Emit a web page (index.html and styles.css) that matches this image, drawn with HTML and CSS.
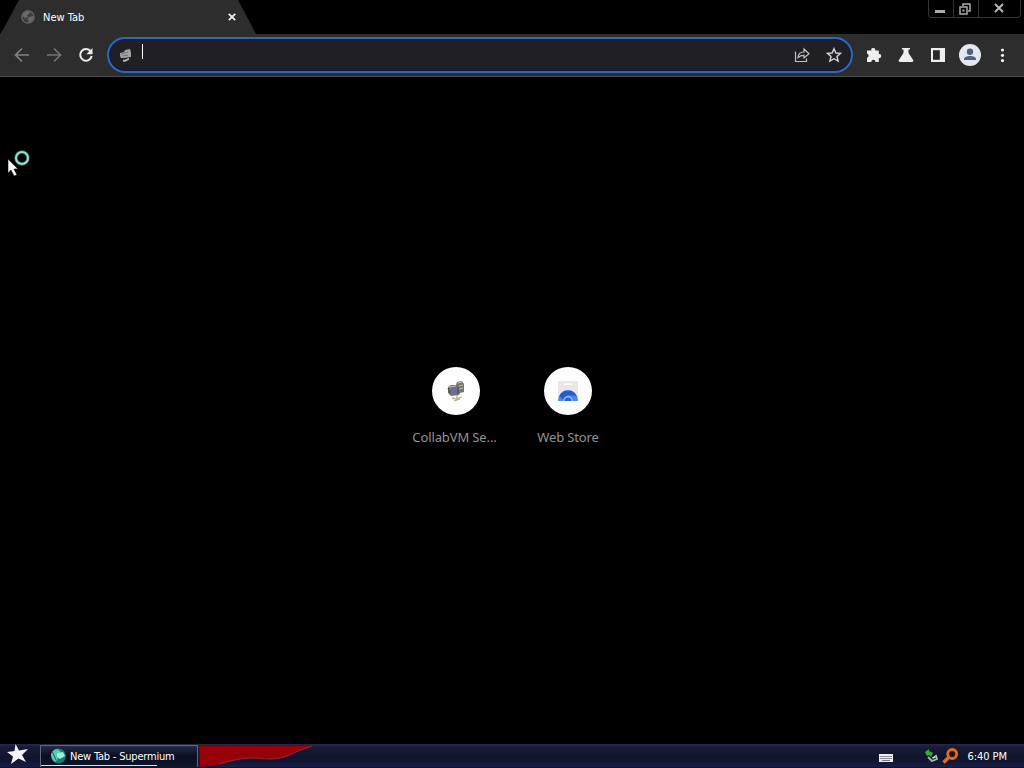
FILE: index.html
```html
<!DOCTYPE html>
<html lang="en">
<head>
<meta charset="utf-8">
<title>New Tab</title>
<link rel="stylesheet" href="styles.css">
</head>
<body>
<div class="screen">
  <header class="tabstrip">
    <div class="tab">
      <svg class="globe" width="14" height="14" viewBox="0 0 14 14"><circle cx="7" cy="7" r="6.200" fill="#3c3c3c" stroke="#666" stroke-width="1.300"/><path d="M2 3.500 6 1l3 1-1 2-2 1 1 2-3 1-3-2zM8 7l4-1 .5 2L10 12l-3 .5 1-2-2-1z" fill="#6a6a6a"/></svg>
      <span class="tab-title">New Tab</span>
      <svg class="tab-close" width="8" height="8" viewBox="0 0 8 8"><path d="M.8.8l6.400 6.400M7.200.8.8 7.200" stroke="#eee" stroke-width="1.800"/></svg>
    </div>
    <div class="window-controls">
      <span class="control minimize"><svg width="12" height="12" viewBox="0 0 12 12"><path d="M1 7.500h10" stroke="#aaa" stroke-width="3"/></svg></span>
      <span class="control restore"><svg width="12" height="12" viewBox="0 0 12 12" fill="none" stroke="#aaa" stroke-width="1.500"><path d="M4 3V1h7v7H9M1 4h7v7H1z"/><path d="M3.500 7.500h2" stroke-width="2"/></svg></span>
      <span class="control close"><svg width="10" height="10" viewBox="0 0 10 10"><path d="M1 1l8 8M9 1 1 9" stroke="#b8b8b8" stroke-width="2"/></svg></span>
    </div>
  </header>
  <nav class="toolbar">
    <div class="nav-buttons">
      <svg width="16" height="16" viewBox="0 0 16 16" fill="none" stroke="#818181" stroke-width="1.700"><path d="M15 8H2M8 1.500 1.500 8 8 14.500"/></svg>
      <svg width="16" height="16" viewBox="0 0 16 16" fill="none" stroke="#747474" stroke-width="1.700"><path d="M1 8h13M8 1.500 14.500 8 8 14.500"/></svg>
      <svg width="16" height="16" viewBox="0 0 16 16"><path d="M12.700 4.400A5.800 5.800 0 1 0 13.700 9" fill="none" stroke="#eee" stroke-width="2"/><path d="M14.500 1v6.200H8.300z" fill="#eee"/></svg>
    </div>
    <div class="omnibox">
      <svg class="site-icon" width="14" height="16" viewBox="0 0 14 16"><path d="M2 6l4-1 1-2 5-1 1 4v4l-7 1-3 0-1-2z" fill="#a5a3a3"/><path d="M3 7l7-2M4 9l6-1" stroke="#777"/><path d="M5 13.500l2 .3 4-2" stroke="#bbb" stroke-width="1.800" fill="none"/></svg>
      <span class="caret"></span>
      <svg class="share" width="16" height="16" viewBox="0 0 16 16" fill="none" stroke="#c0c0c0" stroke-width="1.200"><path d="M1.500 4.500v10h11v-3M4 10.500C4.200 7 6.500 5 10 5V2l5 4.700-5 4.300V8.300C7.500 8.200 5.700 9 4 10.500z"/></svg>
      <svg width="16" height="16" viewBox="0 0 16 16"><path d="M8 1.700 9.900 6l4.700.4-3.600 3.100 1.100 4.600L8 11.700l-4.100 2.400L5 9.500 1.400 6.400 6.100 6z" fill="none" stroke="#d5d5d5" stroke-width="1.400"/></svg>
    </div>
    <div class="actions">
      <svg width="16" height="16" viewBox="0 0 16 16"><path d="M1 3.500h4.300a2 2 0 1 1 3.900 0h3.600v3.600a2 2 0 1 1 0 3.900v3.900H9.500a2.100 2.100 0 0 0-4.200 0H1v-4.200a2.100 2.100 0 0 0 0-4.100z" fill="#eee"/></svg>
      <svg width="16" height="16" viewBox="0 0 16 16"><path d="M4 1h8v1.600h-1.500V6l4.700 7.100c.6 1-.1 1.900-1.100 1.900H1.900c-1 0-1.700-.9-1.100-1.900L5.500 6V2.600H4z" fill="#eee"/></svg>
      <svg width="16" height="16" viewBox="0 0 16 16"><path d="M1 1h14v14H1z" fill="#eee"/><path d="M3 3.200h6.800v9.600H3z" fill="#292929"/></svg>
      <svg class="avatar" width="22" height="22" viewBox="0 0 22 22"><circle cx="11" cy="11" r="11" fill="#e4e8f0"/><circle cx="11" cy="7.700" r="3.200" fill="#53617a"/><path d="M5 16v-1c0-4 12-4 12 0v1z" fill="#53617a"/></svg>
      <svg width="16" height="16" viewBox="0 0 16 16" fill="#eee"><circle cx="8.500" cy="3" r="1.600"/><circle cx="8.500" cy="8.300" r="1.600"/><circle cx="8.500" cy="13.600" r="1.600"/></svg>
    </div>
  </nav>
  <main class="page">
    <a class="shortcut">
      <span class="disc"><svg width="20" height="22" viewBox="0 0 20 22"><path d="M2 7l3-2 5 0 1-3 5-1 2 3v8l-4 1-1 2-8 1-3-3z" fill="#77766d"/><path d="M4 9l7-2 1 6-7 1z" fill="#6c68ad"/><path d="M3 7l7-1M12 3l4-1M13 6l4-1M13 9l4-1" stroke="#bbb9af" stroke-width="1.200"/><path d="M12 7v7M2 8l2 5" stroke="#444238"/><path d="M11 15v3M6 18l4 1 6-2M8 21l6-2" stroke="#b5b183" stroke-width="1.300" fill="none"/></svg></span>
      <span class="label label-site">CollabVM Se...</span>
    </a>
    <a class="shortcut">
      <span class="disc"><svg width="20" height="20" viewBox="0 0 20 20"><path d="M0 0h20v20H0z" fill="#e8e6e6"/><path d="M6 3h8" stroke="#f8f8f8" stroke-width="2"/><path d="M0 20a10 11 0 0 1 20 0z" fill="#4c86e8"/><path d="M1.200 15a10 10 0 0 1 17.600 0l-9-1-4 5z" fill="#285acb"/><path d="M5 20a5 5 0 0 1 10 0z" fill="#91b9f6"/><path d="M6.500 20a3.500 3.500 0 0 1 7 0z" fill="#2765d7"/></svg></span>
      <span class="label">Web Store</span>
    </a>
  </main>
  <footer class="taskbar">
    <svg class="start" width="22" height="21" viewBox="0 0 22 21"><path d="M8.500 0 12 6.500 21 5l-6 6 4 7-7.500-3.500L4 20l2-7.500L0 8l7.500-1z" fill="#f4f4fb"/></svg>
    <div class="task">
      <svg class="task-icon" width="17" height="16" viewBox="0 0 17 16"><circle cx="8.500" cy="8" r="7.500" fill="#187b70"/><path d="M1 6Q3 1 8 1l3 3-4 3 1 4-3 3Q1 11 1 6z" fill="#58c9ac"/><path d="M7 5l6-1 2 4-5 3-3-2z" fill="#9af3d8"/><path d="M2 3l4 9" stroke="#25665f"/></svg>
      <span class="task-title">New Tab - Supermium</span>
    </div>
    <svg class="ribbon" width="114" height="24" viewBox="0 0 114 24"><path d="M0 2h114Q98 7 88 12 78 16 62 14.500 44 13 34 17 24 21 1 23z" fill="#980008"/><path d="M20 19.500Q34 16 38 15.500 48 13 62 14.500q16 1.500 26-2.500 12-6 25-10" fill="none" stroke="#8c2733" stroke-width="1.200"/></svg>
    <div class="tray">
      <svg class="keyboard" width="14" height="8" viewBox="0 0 14 8"><path d="M0 0h14v8H0z" fill="#eee"/><path d="M1.500 2.500h11M1.500 4.500h11" stroke="#242b4b" stroke-dasharray="1 1"/><path d="M3 6.500h8" stroke="#777"/></svg>
      <svg class="device" width="14" height="14" viewBox="0 0 14 14"><path d="M0 3l4-3v2l4 2-2 4-2-2-2 1z" fill="#35ad35"/><path d="M3 8l4 4 5-2-1-3-3 2" fill="none" stroke="#a9bdb9" stroke-width="1.800"/><path d="M7 9l3-1" stroke="#eee"/></svg>
      <svg class="search" width="17" height="17" viewBox="0 0 17 17"><circle cx="10.200" cy="6" r="4.500" fill="#191829" stroke="#e86916" stroke-width="2.800"/><path d="M7 9l-5.500 5.500" stroke="#e86916" stroke-width="3.500"/></svg>
      <span class="clock">6:40 PM</span>
    </div>
  </footer>
  <svg class="pointer" width="24" height="28" viewBox="0 0 24 28"><path d="M1 9v14l3-3 3 6 3-1-3-6h4z" fill="#f5f5f5" stroke="#000" stroke-width=".5"/><circle cx="15" cy="8" r="6" fill="none" stroke="#126351" stroke-width="3.500"/><circle cx="15" cy="8" r="6" fill="none" stroke="#a1ddce" stroke-width="2"/></svg>
</div>
</body>
</html>
```
FILE: styles.css
```css
* { box-sizing: border-box; }
body { margin: 0; background: #000; color: #fff; font-family: "Noto Sans", sans-serif; }
svg { display: block; flex: none; }
.screen { position: relative; display: flex; flex-direction: column; width: 1024px; height: 768px; overflow: hidden; }
.tabstrip { display: flex; justify-content: space-between; align-items: flex-start; height: 34px; }
.tab { display: flex; align-items: center; width: 256px; height: 34px; padding: 0 20px 0 21px; background: #2d2d2d; clip-path: polygon(19px 0, 238px 0, 256px 34px, 0 34px, 4px 28px); }
.tab-title { margin-left: 8px; font-family: "DejaVu Sans Condensed", "DejaVu Sans", sans-serif; font-stretch: condensed; font-size: 11px; }
.tab-close { margin-left: auto; }
.window-controls { display: flex; width: 93px; height: 18px; margin-right: 3px; border: 1px solid #353535; border-top: 0; border-radius: 0 0 4px 4px; }
.control { display: flex; align-items: center; justify-content: center; width: 25px; border-right: 1px solid #353535; }
.minimize { width: 25px; padding: 3px 2px 0 0; }
.restore { padding-right: 2px; }
.close { flex: 1; border: 0; padding: 0 1px 2px 0; }
.toolbar { display: flex; align-items: center; height: 43px; padding-left: 14px; background: #2d2d2d; border-bottom: 1px solid #4b4b4b; }
.nav-buttons { display: flex; gap: 16px; width: 93px; }
.omnibox { display: flex; align-items: center; width: 746px; height: 36px; padding: 0 9px; border: 2px solid #2f67bc; border-radius: 18px; background: #211f26; box-shadow: inset 0 0 0 1px #101c3e; }
.caret { width: 1px; height: 15px; margin: -8px 0 0 10px; background: #fff; }
.share { margin: 0 16px 0 auto; }
.actions { display: flex; align-items: center; gap: 16px; margin-left: 13px; }
.avatar { margin: 0 -3px; }
.page { display: flex; flex: 1; justify-content: center; align-items: flex-start; padding-top: 290px; }
.shortcut { display: flex; flex-direction: column; align-items: center; width: 112px; }
.disc { display: flex; align-items: center; justify-content: center; width: 48px; height: 48px; border-radius: 50%; background: #fff; }
.label { margin: 13px 0 0; color: #929292; font-size: 13px; line-height: 18px; letter-spacing: -.12px; white-space: nowrap; }
.label-site { margin-right: 3px; }
.taskbar { display: flex; align-items: center; height: 24px; background: linear-gradient(#26294b 0, #171b36 3px, #10142b 14px, #171d45 23px, #080a18); }
.start { margin: -4px 0 0 7px; }
.task { display: flex; align-items: center; width: 158px; height: 22px; margin-left: 11px; padding-left: 9px; border: 1px solid #60677a; border-bottom: 0; background: linear-gradient(90deg, #dce0e8 0 116px, transparent 116px) 0 19px / 100% 1px no-repeat, linear-gradient(#252c43, #090e22 10px, #10162d); }
.task-title { margin: 0 0 0 3px; white-space: nowrap; font-family: "DejaVu Sans Condensed", "DejaVu Sans", sans-serif; font-stretch: condensed; font-size: 11px; letter-spacing: -.2px; }
.task-icon { margin-top: -1px; }
.ribbon { margin-left: 1px; }
.tray { display: flex; align-items: center; margin-left: auto; padding-right: 17px; }
.keyboard { margin: 4px 32px 0 0; }
.search { margin-left: 3px; }
.clock { margin-left: 8px; white-space: nowrap; font-family: "DejaVu Sans Condensed", "DejaVu Sans", sans-serif; font-stretch: condensed; font-size: 11px; letter-spacing: -.05px; }
.pointer { position: absolute; left: 7px; top: 150px; }
```
